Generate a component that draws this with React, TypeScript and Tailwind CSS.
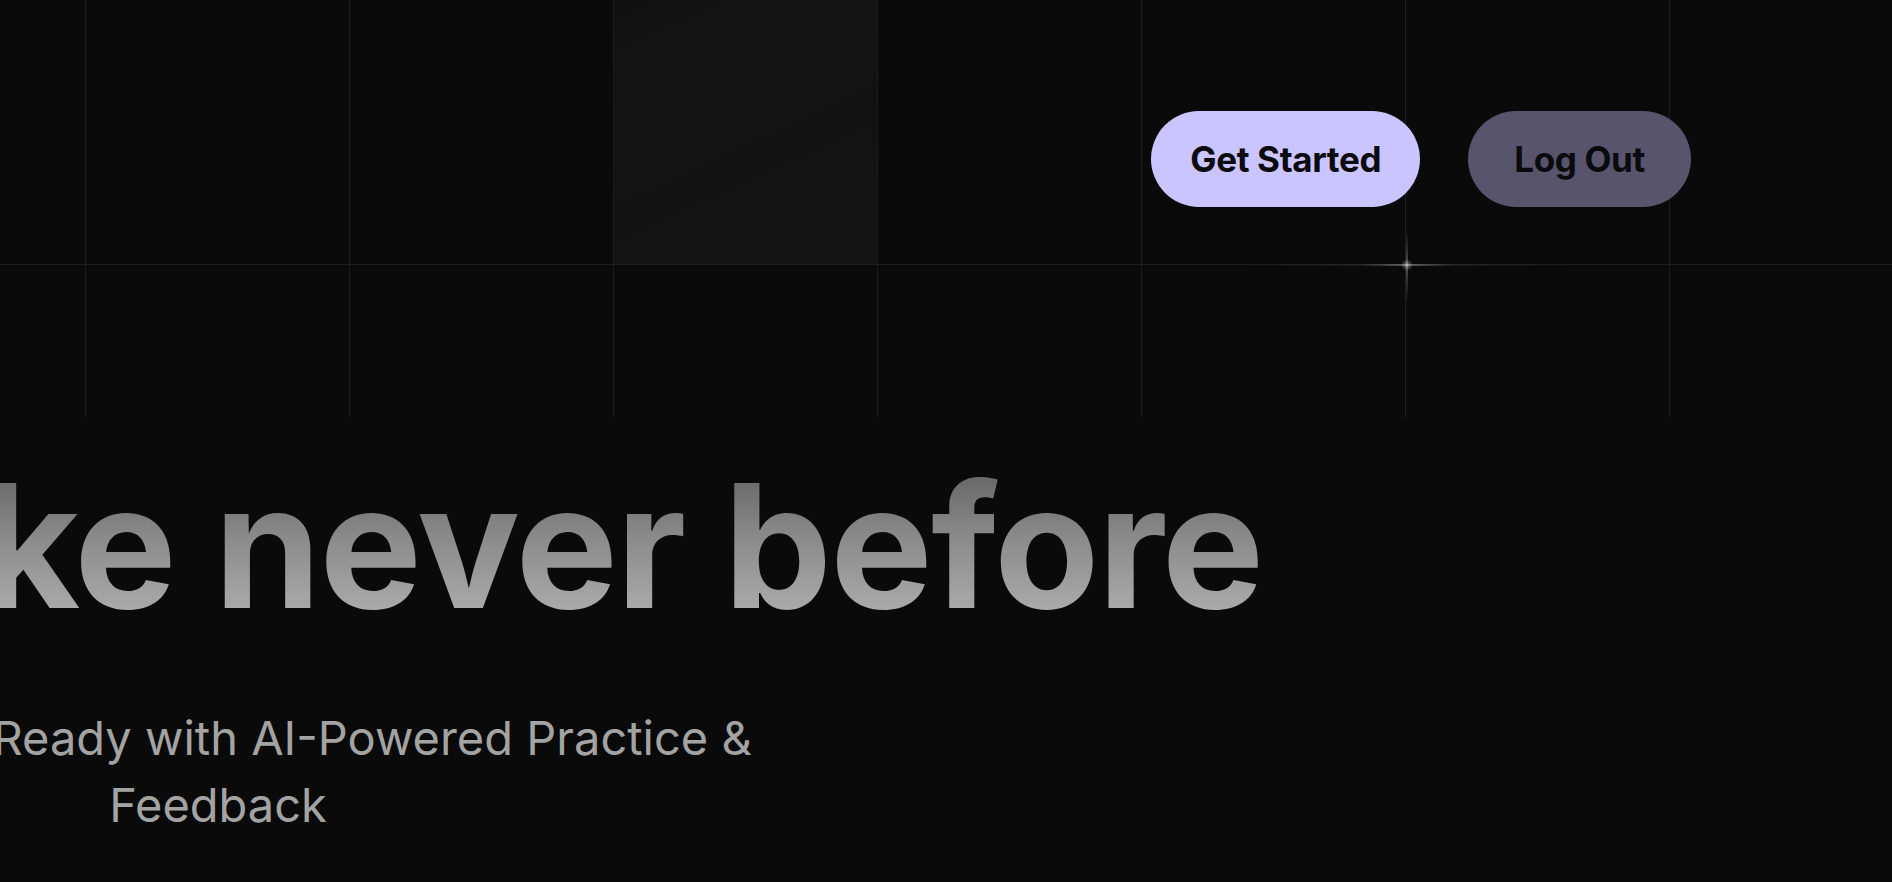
import React from "react";

const cols = Array.from({ length: 9 });

export default function App() {
  return (
    <div
      className="relative h-[882px] w-full overflow-hidden bg-[#0a0a0a]"
      style={{ fontFamily: "Inter, 'Noto Sans', sans-serif" }}
    >
      {/* decorative grid background */}
      <div className="pointer-events-none absolute inset-x-0 top-0 h-[418px] overflow-hidden">
        <div className="ml-[-178px] grid grid-cols-[repeat(9,264px)] grid-rows-[265px_265px]">
          {cols.map((_, i) => (
            <div
              key={`a${i}`}
              className={
                i === 3
                  ? "border-b border-r border-[#1c1c1c] bg-[linear-gradient(155deg,#111111_0%,#141414_35%,#121212_55%,#131313_100%)]"
                  : i === 5
                  ? "border-b border-r border-b-[#1c1c1c] border-r-[#202020]"
                  : "border-b border-r border-[#1c1c1c]"
              }
            />
          ))}
          {cols.map((_, i) => (
            <div
              key={`b${i}`}
              className={i === 5 ? "border-r border-[#202020]" : "border-r border-[#1c1c1c]"}
            />
          ))}
        </div>
        {/* sparkle */}
        <div className="absolute left-[1227px] top-[264px] h-[2px] w-[360px] bg-[radial-gradient(ellipse_at_center,rgba(255,255,255,0.12)_0%,rgba(255,255,255,0.04)_50%,transparent_75%)]" />
        <div className="absolute left-[1357px] top-[264px] h-[2px] w-[100px] bg-[radial-gradient(ellipse_at_center,rgba(255,255,255,0.6)_0%,rgba(255,255,255,0.15)_45%,transparent_75%)]" />
        <div className="absolute left-[1406px] top-[228px] h-[76px] w-[2px] bg-[radial-gradient(ellipse_at_center,rgba(255,255,255,0.65)_0%,rgba(255,255,255,0.15)_45%,transparent_75%)]" />
        <div className="absolute left-[1401px] top-[259px] h-[12px] w-[12px] rounded-full bg-[radial-gradient(circle,rgba(255,255,255,0.45)_0%,transparent_70%)]" />
      </div>

      {/* header */}
      <header className="relative flex justify-end gap-[48px] pr-[201px] pt-[111px]">
        <button className="flex h-[96px] items-center rounded-full bg-[#cbc5ff] px-[39px] text-[35px] font-bold tracking-[-0.01em] text-[#0a0a0f]">
          Get Started
        </button>
        <button className="flex h-[96px] items-center rounded-full bg-[#57546b] px-[46px] text-[35px] font-bold tracking-[-0.01em] text-[#0a0a0f]">
          Log Out
        </button>
      </header>

      {/* hero */}
      <section className="relative mt-[252px] flex w-[436px] flex-col items-center text-center">
        <h1 className="whitespace-nowrap bg-[linear-gradient(180deg,#5f5f5f_0%,#8a8a8a_45%,#b3b3b3_100%)] bg-clip-text pl-[32px] text-[172px] font-bold leading-none tracking-[-0.01em] text-transparent">
          Prepare like never before
        </h1>
        <p className="mt-[73px] w-[1160px] shrink-0 text-[47px] leading-[67px] text-[#a3a3a3]">
          Get Interview Ready with AI-Powered Practice &amp; Feedback
        </p>
      </section>
    </div>
  );
}
